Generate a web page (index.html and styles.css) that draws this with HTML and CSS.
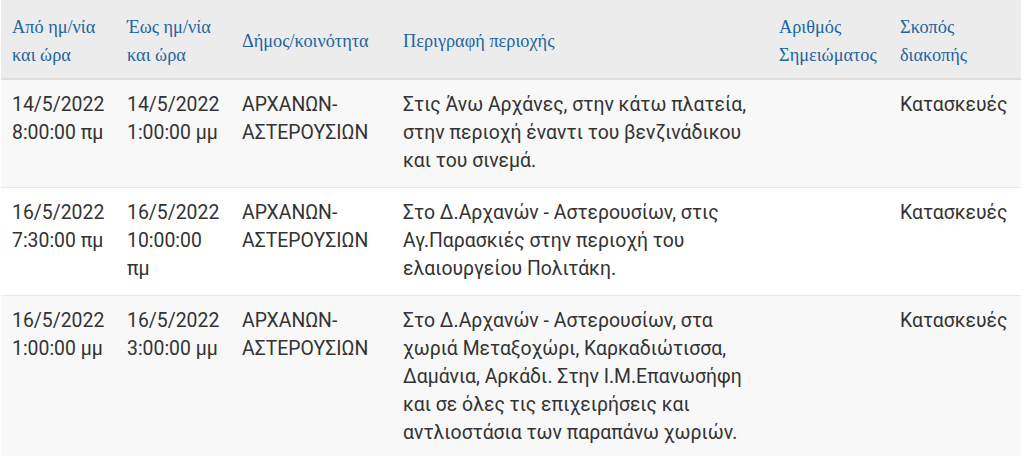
FILE: index.html
```html
<!DOCTYPE html>
<html lang="el">
<head>
<meta charset="utf-8">
<link rel="stylesheet" href="styles.css">
</head>
<body>
<div class="wrap">
<table class="outages">
<colgroup>
<col class="c1"><col class="c2"><col class="c3"><col class="c4"><col class="c5"><col class="c6">
</colgroup>
<thead>
<tr>
<th>Από ημ/νία και ώρα</th>
<th>Έως ημ/νία και ώρα</th>
<th>Δήμος/κοινότητα</th>
<th>Περιγραφή περιοχής</th>
<th>Αριθμός Σημειώματος</th>
<th>Σκοπός διακοπής</th>
</tr>
</thead>
<tbody>
<tr class="odd">
<td>14/5/2022 8:00:00 πμ</td>
<td>14/5/2022 1:00:00 μμ</td>
<td>ΑΡΧΑΝΩΝ-ΑΣΤΕΡΟΥΣΙΩΝ</td>
<td>Στις Άνω Αρχάνες, στην κάτω πλατεία, στην περιοχή έναντι του βενζινάδικου και του σινεμά.</td>
<td></td>
<td>Κατασκευές</td>
</tr>
<tr>
<td>16/5/2022 7:30:00 πμ</td>
<td>16/5/2022 10:00:00 πμ</td>
<td>ΑΡΧΑΝΩΝ-ΑΣΤΕΡΟΥΣΙΩΝ</td>
<td>Στο Δ.Αρχανών - Αστερουσίων, στις Αγ.Παρασκιές στην περιοχή του ελαιουργείου Πολιτάκη.</td>
<td></td>
<td>Κατασκευές</td>
</tr>
<tr class="odd">
<td>16/5/2022 1:00:00 μμ</td>
<td>16/5/2022 3:00:00 μμ</td>
<td>ΑΡΧΑΝΩΝ-ΑΣΤΕΡΟΥΣΙΩΝ</td>
<td>Στο Δ.Αρχανών - Αστερουσίων, στα χωριά Μεταξοχώρι, Καρκαδιώτισσα, Δαμάνια, Αρκάδι. Στην Ι.Μ.Επανωσήφη και σε όλες τις επιχειρήσεις και αντλιοστάσια των παραπάνω χωριών.</td>
<td></td>
<td>Κατασκευές</td>
</tr>
</tbody>
</table>
</div>
</body>
</html>
```
FILE: styles.css
```css
html, body {
  margin: 0;
  padding: 0;
  background: #ffffff;
}
.wrap {
  padding: 0 3px 0 1px;
}
.outages {
  width: 1020px;
  table-layout: fixed;
  border-collapse: collapse;
}
.c1 { width: 115px; }
.c2 { width: 115px; }
.c3 { width: 161px; }
.c4 { width: 376px; }
.c5 { width: 121px; }
.c6 { width: 132px; }
.outages th {
  background: #ececec;
  color: #23649f;
  font-family: "Liberation Serif", "Times New Roman", serif;
  font-size: 18.3px;
  font-weight: normal;
  line-height: 28px;
  text-align: left;
  vertical-align: middle;
  padding: 13px 11px 9px 11px;
  border-bottom: 2px solid #dddddd;
}
.outages td {
  font-family: Roboto, "Noto Sans", sans-serif;
  font-size: 19.4px;
  color: #333333;
  line-height: 28px;
  vertical-align: top;
  padding: 11px 11px 12px 11px;
  border-top: 1px solid #eaeaea;
  word-wrap: break-word;
}
.outages tr.odd td {
  background: #f8f8f8;
}
```
